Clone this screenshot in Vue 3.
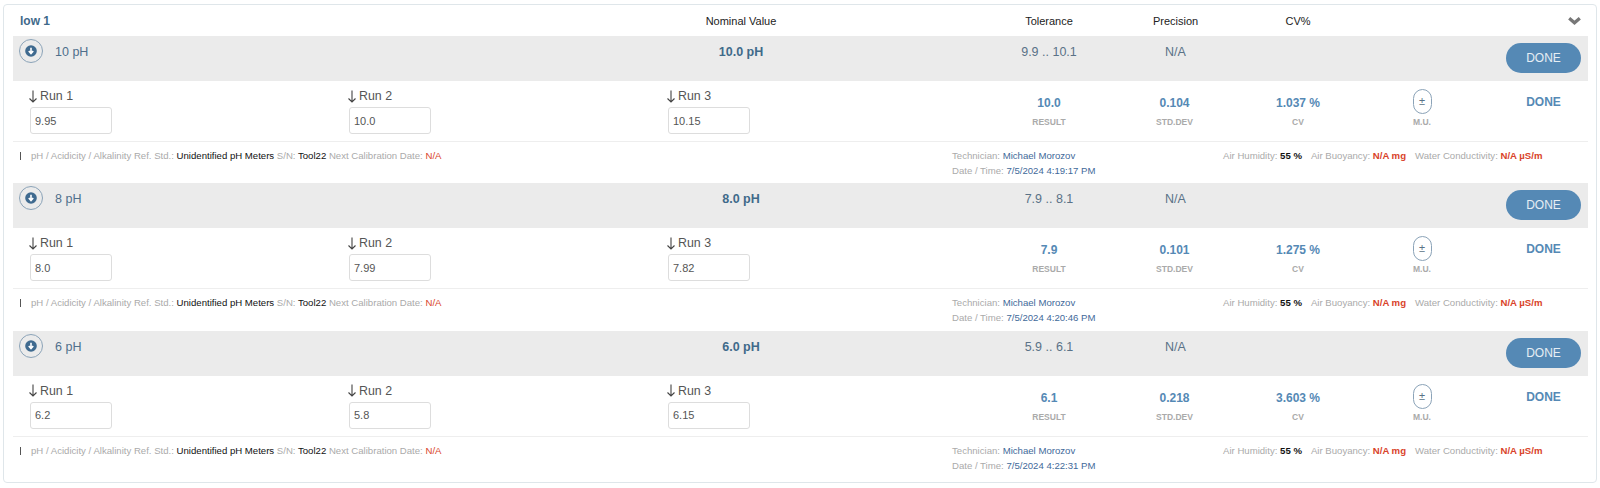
<template>
  <div class="panel">
    <div class="panel-head top-cols">
      <div class="panel-title">low 1</div>
      <div class="head-cell">Nominal Value</div>
      <div class="head-cell">Tolerance</div>
      <div class="head-cell">Precision</div>
      <div class="head-cell">CV%</div>
      <div></div>
      <div class="chevron">
        <svg width="13" height="8" viewBox="0 0 13 8">
          <path d="M1.2 1.2 L6.5 5.8 L11.8 1.2" fill="none" stroke="#777" stroke-width="3.2" />
        </svg>
      </div>
    </div>

    <div v-for="item in items" :key="item.name" class="item">
      <div class="band top-cols">
        <div class="band-name">
          <svg width="24" height="24" viewBox="0 0 24 24">
            <circle cx="12" cy="12" r="11.5" fill="none" stroke="#8ba3b8" stroke-width="1" />
            <circle cx="12" cy="12" r="5.8" fill="#3f6a8f" />
            <path d="M12 8.8 V14 M9.8 12 L12 14.6 L14.2 12" fill="none" stroke="#fff" stroke-width="1.6" />
          </svg>
          <span>{{ item.name }}</span>
        </div>
        <div class="band-nominal">{{ item.nominal }}</div>
        <div class="band-cell">{{ item.tolerance }}</div>
        <div class="band-cell">N/A</div>
        <div></div>
        <div></div>
        <div class="end-cell"><button class="done-btn">DONE</button></div>
      </div>

      <div class="runs">
        <div v-for="(run, i) in item.runs" :key="i" class="run">
          <div class="run-label">
            <svg width="10" height="13" viewBox="0 0 10 13">
              <path d="M5 0.5 V12 M1.5 8.5 L5 12 L8.5 8.5" fill="none" stroke="#444" stroke-width="1.1" />
            </svg>
            <span>Run {{ i + 1 }}</span>
          </div>
          <input class="run-input" :value="run" />
        </div>
        <div class="stat"><b>{{ item.result }}</b><small>RESULT</small></div>
        <div class="stat"><b>{{ item.std }}</b><small>STD.DEV</small></div>
        <div class="stat"><b>{{ item.cv }}</b><small>CV</small></div>
        <div class="stat">
          <span class="mu-btn">±</span>
          <small>M.U.</small>
        </div>
        <div class="end-cell"><b class="done-text">DONE</b></div>
      </div>

      <div class="foot">
        <div class="foot-ref">
          <i class="tick"></i>
          <span>pH / Acidicity / Alkalinity Ref. Std.: <em>Unidentified pH Meters</em> S/N: <em>Tool22</em> Next Calibration Date: <em class="red">N/A</em></span>
        </div>
        <div>
          <div>Technician: <em class="blue">Michael Morozov</em></div>
          <div>Date / Time: <em class="blue">{{ item.time }}</em></div>
        </div>
        <div class="foot-env">
          <span>Air Humidity: <strong>55 %</strong></span>
          <span>Air Buoyancy: <strong class="red">N/A mg</strong></span>
          <span>Water Conductivity: <strong class="red">N/A µS/m</strong></span>
        </div>
      </div>
    </div>
  </div>
</template>

<script setup>
const items = [
  { name: '10 pH', nominal: '10.0 pH', tolerance: '9.9 .. 10.1', runs: ['9.95', '10.0', '10.15'], result: '10.0', std: '0.104', cv: '1.037 %', time: '7/5/2024 4:19:17 PM' },
  { name: '8 pH', nominal: '8.0 pH', tolerance: '7.9 .. 8.1', runs: ['8.0', '7.99', '7.82'], result: '7.9', std: '0.101', cv: '1.275 %', time: '7/5/2024 4:20:46 PM' },
  { name: '6 pH', nominal: '6.0 pH', tolerance: '5.9 .. 6.1', runs: ['6.2', '5.8', '6.15'], result: '6.1', std: '0.218', cv: '3.603 %', time: '7/5/2024 4:22:31 PM' },
];
</script>

<style>
body {
  margin: 0;
  background: #fff;
}
</style>

<style scoped>
.panel {
  box-sizing: border-box;
  width: 1594px;
  height: 479px;
  margin: 4px 0 0 3px;
  padding: 0 8px 0 9px;
  background: #fff;
  border: 1px solid #dfe6ea;
  border-radius: 4px;
  font-family: "Liberation Sans", Arial, sans-serif;
  font-size: 11px;
  color: #222;
}

.top-cols {
  display: grid;
  grid-template-columns: 475px 492px 124px 129px 116px 128px 1fr;
  padding-left: 7px;
}

.panel-head {
  height: 31px;
  align-items: center;
}

.panel-title {
  font-weight: bold;
  font-size: 12px;
  color: #3f6a8a;
}

.head-cell {
  text-align: center;
}

.chevron {
  display: flex;
  justify-content: flex-end;
  padding-right: 7px;
}

.band {
  height: 45px;
  padding-left: 6px;
  grid-template-columns: 476px 492px 124px 129px 116px 128px 1fr;
  background: #ebebeb;
  color: #5a7287;
  font-size: 12.5px;
}

.band-name {
  display: flex;
  align-items: flex-start;
  gap: 12px;
  padding-top: 3px;
}

.band-name span {
  padding-top: 6px;
  color: #4f6f8c;
}

.band-nominal {
  padding-top: 9px;
  text-align: center;
  font-weight: bold;
  color: #3f6a8a;
}

.band-cell {
  padding-top: 9px;
  text-align: center;
}

.end-cell {
  display: flex;
  justify-content: flex-end;
  padding-right: 7px;
}

.done-btn {
  width: 75px;
  height: 30px;
  margin-top: 7px;
  padding: 0;
  border: none;
  border-radius: 15px;
  background: #5589b5;
  color: #e6eef4;
  font-family: inherit;
  font-size: 12px;
}

.done-text {
  width: 75px;
  text-align: center;
  padding-top: 14px;
  font-size: 12px;
  color: #5589b5;
}

.runs {
  display: grid;
  grid-template-columns: 319px 319px 319px 124px 127px 120px 128px 1fr;
  height: 60px;
  padding-left: 17px;
}

.run-label {
  display: flex;
  align-items: center;
  gap: 2px;
  height: 14px;
  margin-left: -2px;
  padding-top: 8px;
  font-size: 12.4px;
  color: #555;
}

.run-input {
  display: block;
  box-sizing: border-box;
  width: 82px;
  height: 27px;
  margin-top: 4px;
  padding: 0 4px;
  border: 1px solid #ddd;
  border-radius: 3px;
  font-family: inherit;
  font-size: 11px;
  color: #555;
}

.stat {
  display: flex;
  flex-direction: column;
  align-items: center;
  padding-top: 15px;
  color: #5589b5;
  font-size: 12px;
}

.stat b {
  height: 14px;
  line-height: 14px;
}

.stat small {
  margin-top: 7px;
  font-size: 8.5px;
  font-weight: bold;
  color: #aaa;
}

.mu-btn {
  box-sizing: border-box;
  flex: none;
  width: 19px;
  height: 25px;
  margin: -7px 0 -4px;
  border: 1px solid #8ba3b8;
  border-radius: 10px;
  text-align: center;
  line-height: 23px;
  font-size: 11px;
  color: #5a7287;
}

.foot {
  display: grid;
  grid-template-columns: 939px 271px 1fr;
  box-sizing: border-box;
  height: 42.4px;
  padding-top: 6px;
  border-top: 1px solid #eee;
  font-size: 9.6px;
  line-height: 15px;
  color: #aaa;
}

.foot em {
  font-style: normal;
  color: #111;
}

.foot em.blue {
  color: #3f6a9a;
}

.foot em.red,
.foot strong.red {
  color: #d9432a;
}

.foot-ref {
  display: flex;
  align-items: flex-start;
  padding-left: 7px;
}

.tick {
  flex: none;
  width: 1px;
  height: 8px;
  margin: 4px 10px 0 0;
  background: #555;
}

.foot-env {
  display: flex;
  gap: 9px;
}

.foot-env strong {
  color: #111;
}
</style>
